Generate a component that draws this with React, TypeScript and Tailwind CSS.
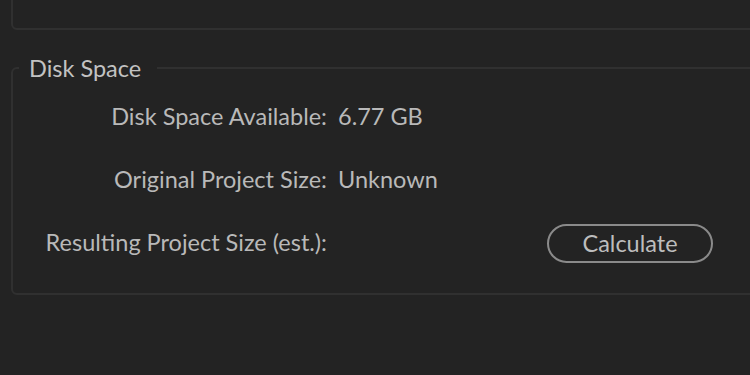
export default function App() {
	const rows = [
		{ label: 'Disk Space Available:', value: '6.77 GB' },
		{ label: 'Original Project Size:', value: 'Unknown' },
	];

	return (
		<div className="h-[375px] w-[750px] overflow-hidden bg-[#232323] font-['Lato',sans-serif] text-[23.5px] text-[#b9b9b9]">
			<div className="-mt-3 ml-[11px] -mr-4 h-[42px] rounded-md border-2 border-[#303030]" />

			<fieldset className="mt-[25px] ml-[11px] -mr-4 rounded-md border-2 border-[#303030] pb-[30px]">
				<legend className="ml-[6px] pl-[10px] pr-[16px] leading-[26px] text-[#c2c2c2]">Disk Space</legend>

				<div className="mt-[16px] grid grid-cols-[314px_1fr] gap-x-[11px] gap-y-[23px]">
					{rows.map((row) => (
						<div key={row.label} className="contents">
							<div className="flex h-10 items-center justify-end">{row.label}</div>
							<div className="flex h-10 items-center">{row.value}</div>
						</div>
					))}
					<div className="flex h-10 items-center justify-end">Resulting Project Size (est.):</div>
					<div className="flex h-10 items-center">
						<button
							type="button"
							className="ml-[209px] h-[39px] w-[166px] rounded-full border-2 border-[#8a8a8a] text-[#bdbdbd]"
						>
							Calculate
						</button>
					</div>
				</div>
			</fieldset>
		</div>
	);
}
